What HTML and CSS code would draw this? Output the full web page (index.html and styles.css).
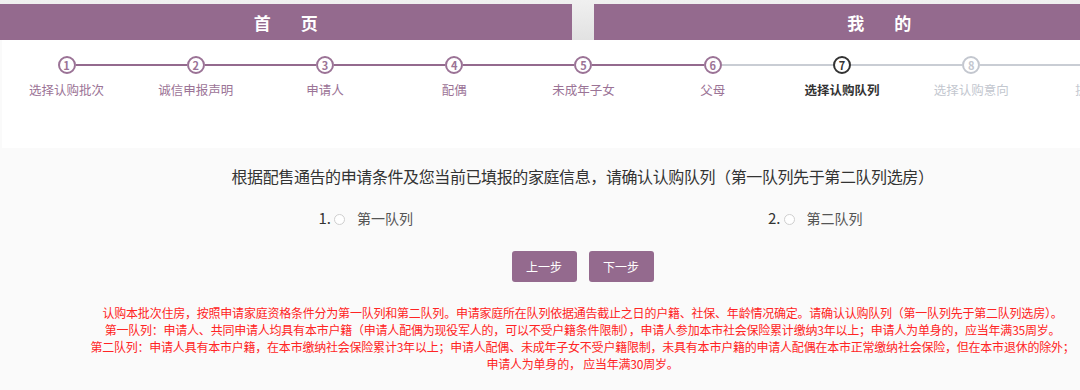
FILE: index.html
```html
<!DOCTYPE html>
<html lang="zh-CN">
<head>
    <meta charset="UTF-8">
    <title>选择认购队列</title>
    <link rel="stylesheet" href="styles.css">
</head>
<body>
    <div class="page">
        <!-- Top navigation -->
        <div class="top-nav">
            <div class="nav-tab"><span>首</span><span>页</span></div>
            <div class="nav-tab"><span>我</span><span>的</span></div>
        </div>

        <!-- Step bar -->
        <div class="steps">
            <div class="step done"><span class="num">1</span><span class="label">选择认购批次</span></div>
            <div class="step done"><span class="num">2</span><span class="label">诚信申报声明</span></div>
            <div class="step done"><span class="num">3</span><span class="label">申请人</span></div>
            <div class="step done"><span class="num">4</span><span class="label">配偶</span></div>
            <div class="step done"><span class="num">5</span><span class="label">未成年子女</span></div>
            <div class="step done"><span class="num">6</span><span class="label">父母</span></div>
            <div class="step active"><span class="num">7</span><span class="label">选择认购队列</span></div>
            <div class="step"><span class="num">8</span><span class="label">选择认购意向</span></div>
            <div class="step"><span class="num">9</span><span class="label">提交申请</span></div>
        </div>

        <!-- Queue choice -->
        <div class="content">
            <p class="question">根据配售通告的申请条件及您当前已填报的家庭信息，请确认认购队列（第一队列先于第二队列选房）</p>

            <div class="options">
                <label class="option"><span class="idx">1.</span><input type="radio" name="queue"><span class="opt-text">第一队列</span></label>
                <label class="option"><span class="idx">2.</span><input type="radio" name="queue"><span class="opt-text">第二队列</span></label>
            </div>

            <div class="buttons">
                <button class="btn">上一步</button>
                <button class="btn">下一步</button>
            </div>

            <p class="notice">
                认购本批次住房，按照申请家庭资格条件分为第一队列和第二队列。申请家庭所在队列依据通告截止之日的户籍、社保、年龄情况确定。请确认认购队列（第一队列先于第二队列选房）。<br>
                第一队列：申请人、共同申请人均具有本市户籍（申请人配偶为现役军人的，可以不受户籍条件限制），申请人参加本市社会保险累计缴纳3年以上；申请人为单身的，应当年满35周岁。<br>
                第二队列：申请人具有本市户籍，在本市缴纳社会保险累计3年以上；申请人配偶、未成年子女不受户籍限制，未具有本市户籍的申请人配偶在本市正常缴纳社会保险，但在本市退休的除外；<br>
                申请人为单身的， 应当年满30周岁。
            </p>
        </div>
    </div>
</body>
</html>
```

FILE: styles.css
```css
body {
    margin: 0;
    padding: 0;
    overflow: hidden;
    background-color: #fafafa;
    font-family: "Noto Sans CJK SC", "Noto Sans", sans-serif;
}

.page {
    width: 1165px;
}

.top-nav {
    display: flex;
    gap: 22px;
    padding-top: 4px;
    background: linear-gradient(#f0f0f0, #e2e2e2);
}

.nav-tab {
    flex: 1;
    height: 36px;
    background-color: #946a8e;
    color: white;
    font-size: 17px;
    font-weight: bold;
    display: flex;
    align-items: center;
    justify-content: center;
    gap: 30px;
}

.steps {
    display: flex;
    height: 108px;
    background-color: white;
    margin-left: 2px;
}

.step {
    flex: 1;
    position: relative;
    display: flex;
    flex-direction: column;
    align-items: center;
    padding-top: 16px;
    color: #c3c7cf;
}

.step + .step::before {
    content: "";
    position: absolute;
    top: 24px;
    left: calc(-50% + 9px);
    width: calc(100% - 18px);
    height: 2px;
    background-color: #c9cdd4;
}

.step.done + .step.done::before {
    background-color: #946a8e;
}

.num {
    width: 14px;
    height: 14px;
    border: 2px solid currentColor;
    border-radius: 50%;
    font-size: 11px;
    font-weight: bold;
    line-height: 14px;
    text-align: center;
    background-color: white;
}

.label {
    margin-top: 7px;
    font-size: 12.5px;
    line-height: 18px;
    white-space: nowrap;
}

.step.done {
    color: #9b7396;
}

.step.active {
    color: #333;
}

.step.active .label {
    font-weight: bold;
}

.content {
    padding-top: 16px;
    text-align: center;
}

.question {
    margin: 0;
    font-size: 16px;
    line-height: 24px;
    letter-spacing: -0.4px;
    color: #333;
}

.options {
    display: flex;
    justify-content: center;
    gap: 355px;
    margin-top: 20px;
    padding-left: 16px;
}

.option {
    display: flex;
    align-items: center;
    line-height: 20px;
}

.idx {
    font-size: 15px;
    color: #333;
}

.option input {
    appearance: none;
    width: 11px;
    height: 11px;
    margin: 2px 12px 0 3px;
    border: 1px solid #cfcfcf;
    border-radius: 50%;
    background-color: white;
}

.opt-text {
    font-size: 14px;
    color: #555;
}

.buttons {
    display: flex;
    justify-content: center;
    gap: 12px;
    margin-top: 23px;
}

.btn {
    width: 65px;
    height: 31px;
    border: none;
    border-radius: 3px;
    background-color: #946a8e;
    color: white;
    font-family: inherit;
    font-size: 12px;
}

.notice {
    margin: 22px 0 0;
    font-size: 12px;
    line-height: 17px;
    letter-spacing: -0.22px;
    color: #ff2424;
}
```
